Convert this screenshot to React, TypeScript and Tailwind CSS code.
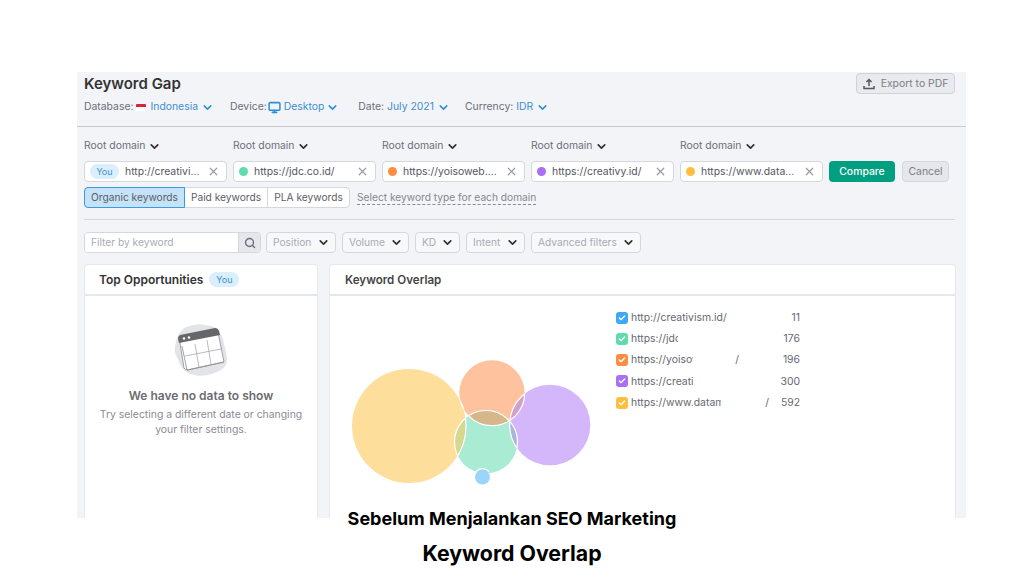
import { ChevronDown, Monitor, Search, X, Check } from "lucide-react";

const Chev = ({ cls = "text-[#333]" }: { cls?: string }) => (
  <ChevronDown size={13} strokeWidth={3.2} className={cls} />
);

const BlueChev = () => <ChevronDown size={13} strokeWidth={2.8} className="text-[#2b8fd6]" />;

const domains = [
  { label: "http://creativi...", color: "", you: true },
  { label: "https://jdc.co.id/", color: "bg-[#5fdcae]" },
  { label: "https://yoisoweb....", color: "bg-[#ff8c43]" },
  { label: "https://creativy.id/", color: "bg-[#a96ff5]" },
  { label: "https://www.data...", color: "bg-[#ffbe3d]" },
];

const filters = [
  { label: "Position", w: "w-[70px]" },
  { label: "Volume", w: "w-[67px]" },
  { label: "KD", w: "w-[45px]" },
  { label: "Intent", w: "w-[59px]" },
  { label: "Advanced filters", w: "w-[110px]" },
];

const legend = [
  { color: "bg-[#3ba9f8]", text: "http://creativism.id/", clip: "w-[96px]", tail: "", tailW: "w-[0px]", n: "11" },
  { color: "bg-[#5fdcae]", text: "https://jdc.co.id/", clip: "w-[47px]", tail: "", tailW: "w-[0px]", n: "176" },
  { color: "bg-[#ff8c43]", text: "https://yoisoweb.com", clip: "w-[62px]", tail: "/", tailW: "w-[46px]", n: "196" },
  { color: "bg-[#a96ff5]", text: "https://creativy.id/", clip: "w-[62px]", tail: "", tailW: "w-[0px]", n: "300" },
  { color: "bg-[#ffbe3d]", text: "https://www.datamedia.id", clip: "w-[90px]", tail: "/", tailW: "w-[48px]", n: "592" },
];

const C = {
  y: { cx: 79, cy: 132, r: 57 },
  o: { cx: 162, cy: 99, r: 32.7 },
  p: { cx: 220, cy: 131, r: 40.3 },
  g: { cx: 156, cy: 148, r: 31.5 },
  b: { cx: 152.5, cy: 183, r: 7.5 },
};

function Venn() {
  return (
    <svg width="270" height="215" viewBox="0 2 270 215" className="shrink-0">
      <defs>
        <clipPath id="cy"><circle {...C.y} /></clipPath>
        <clipPath id="co"><circle {...C.o} /></clipPath>
        <clipPath id="cp"><circle {...C.p} /></clipPath>
        <clipPath id="cg"><circle {...C.g} /></clipPath>
      </defs>
      <circle {...C.y} fill="#fddf9b" />
      <circle {...C.o} fill="#fec39e" />
      <circle {...C.p} fill="#d4b6fb" />
      <circle {...C.g} fill="#a9ecd3" />
      <circle {...C.b} fill="#9dd4fb" />
      <circle {...C.o} fill="#d6b78b" clipPath="url(#cg)" />
      <circle {...C.y} fill="#d6d88e" clipPath="url(#cg)" />
      <circle {...C.y} fill="#fcd09a" clipPath="url(#co)" />
      <circle {...C.o} fill="#d2a1cb" clipPath="url(#cp)" />
      <circle {...C.g} fill="#a9b5da" clipPath="url(#cp)" />
      <g fill="none" stroke="#ffffff" strokeWidth="1.2">
        <circle {...C.y} clipPath="url(#cg)" />
        <circle {...C.y} clipPath="url(#co)" />
        <circle {...C.o} clipPath="url(#cy)" />
        <circle {...C.o} clipPath="url(#cg)" />
        <circle {...C.o} clipPath="url(#cp)" />
        <circle {...C.g} clipPath="url(#cy)" />
        <circle {...C.g} clipPath="url(#co)" />
        <circle {...C.g} clipPath="url(#cp)" />
        <circle {...C.p} clipPath="url(#co)" />
        <circle {...C.p} clipPath="url(#cg)" />
        <path d="M146 178 A8 8 0 0 1 159 178" />
      </g>
    </svg>
  );
}

function Illustration() {
  return (
    <svg width="54" height="54" viewBox="0 0 54 54">
      <path d="M20 1 C26 -1 31 2 37 2 C42 3 47 8 49 15 C50 22 53 28 53 36 C53 42 48 47 40 49 C33 52 24 53 17 50 C11 48 7 44 5 38 C3 32 0 30 1 24 C2 16 4 9 9 5 C13 2 16 2 20 1 Z" fill="#e3e4e8" />
      <path d="M5 13 L41 6 Q43 6 44 8 L50 38 L14 46 Q11 46 10 44 Z" fill="#ffffff" stroke="#8a8a90" strokeWidth="0.8" />
      <path d="M4 15 Q4 12 6 11 L41 4 Q44 4 45 7 L46 11 L5 19 Z" fill="#66666b" />
      <circle cx="10" cy="14.5" r="1.2" fill="#fff" />
      <circle cx="15" cy="13.5" r="1.2" fill="#fff" />
      <path d="M11 32 L47 25 M21 20 L25 43 M33 16 L37 40" stroke="#a9a9ae" strokeWidth="0.8" fill="none" />
      <path d="M8 22 L13 46 L50 38" fill="none" stroke="#8a8a90" strokeWidth="0.8" />
    </svg>
  );
}

export default function App() {
  return (
    <div className="w-[1024px] h-[576px] bg-white pt-[72px] overflow-hidden flex flex-col" style={{ fontFamily: "Inter, sans-serif" }}>
      <div className="ml-[77px] w-[889px] h-[446px] shrink-0 bg-[#f3f4f8] overflow-hidden text-[10.4px] text-[#6c6e79]">
        {/* Header */}
        <div className="h-[55px] border-b border-[#c8cad0] pl-[7px] pr-[11px] flex justify-between items-start pt-px">
          <div>
            <div className="text-[15px] leading-[20px] font-semibold text-[#333] mt-px">Keyword Gap</div>
            <div className="flex items-center mt-[6px] leading-[14px]">
              <span>Database:</span>
              <span className="w-[10px] h-[7px] ml-[3px] mr-[4px] flex flex-col rounded-[1px] overflow-hidden">
                <span className="h-1/2 bg-[#d8233a]" />
                <span className="h-1/2 bg-white" />
              </span>
              <span className="text-[#3f8ed0]">Indonesia</span>
              <span className="ml-[3px]"><BlueChev /></span>
              <span className="ml-[16px]">Device:</span>
              <Monitor size={13} strokeWidth={2.8} className="text-[#2b8fd6] ml-px mr-[3px]" />
              <span className="text-[#3f8ed0]">Desktop</span>
              <span className="ml-[2px]"><BlueChev /></span>
              <span className="ml-[19px]">Date:</span>
              <span className="text-[#3f8ed0] ml-[3px]">July 2021</span>
              <span className="ml-[3px]"><BlueChev /></span>
              <span className="ml-[15px]">Currency:</span>
              <span className="text-[#3f8ed0] ml-[3px]">IDR</span>
              <span className="ml-[3px]"><BlueChev /></span>
            </div>
          </div>
          <div className="w-[99px] h-[21px] rounded-[4px] border border-[#d0d2d8] bg-[#e9eaee] flex items-center justify-center gap-[6px] text-[#7b7d87]">
            <svg width="12" height="12" viewBox="0 0 12 12" fill="none" stroke="#55565c" strokeWidth="1.5">
              <path d="M6 8 V1.5 M3.4 4 L6 1.5 L8.6 4" />
              <path d="M1 8 V10.5 H11 V8" />
            </svg>
            <span>Export to PDF</span>
          </div>
        </div>

        {/* Root domains */}
        <div className="pl-[7px] pt-[12px] flex gap-[6px] items-end">
          {domains.map((d, i) => (
            <div key={i} className="w-[143px]">
              <div className="flex items-center gap-[2px] leading-[14px] mb-[8px]">
                <span>Root domain</span>
                <Chev />
              </div>
              <div className="h-[21px] bg-white rounded-[4px] border border-[#d5d7dc] flex items-center pl-[5px] pr-[6px]">
                {d.you ? (
                  <span className="w-[29px] h-[15px] rounded-full bg-[#dbeefc] text-[#3f8ed0] text-[9px] flex items-center justify-center mr-[6px]">You</span>
                ) : (
                  <span className={`w-[9px] h-[9px] rounded-full ${d.color} mr-[6px]`} />
                )}
                <span className="flex-1 text-[#55565f] whitespace-nowrap overflow-hidden">{d.label}</span>
                <X size={13} strokeWidth={2.2} className="text-[#9a9ba3]" />
              </div>
            </div>
          ))}
          <div className="w-[66px] h-[21px] rounded-[4px] bg-[#009f81] text-white font-medium flex items-center justify-center">Compare</div>
          <div className="w-[47px] h-[21px] ml-px rounded-[4px] bg-[#e6e7ec] border border-[#d5d7dc] text-[#7b7d87] flex items-center justify-center">Cancel</div>
        </div>

        {/* Keyword type */}
        <div className="pl-[7px] mt-[5px] flex items-center text-[10.2px]">
          <div className="flex h-[21px] w-[266px] rounded-[4px] border border-[#d5d7dc] bg-white text-[#5b5d67]">
            <div className="w-[101px] -m-px h-[21px] rounded-l-[4px] border border-[#3b9be0] bg-[#c4e2f8] flex items-center justify-center">Organic keywords</div>
            <div className="w-[83px] ml-px flex items-center justify-center border-r border-[#d5d7dc]">Paid keywords</div>
            <div className="flex-1 flex items-center justify-center">PLA keywords</div>
          </div>
          <span className="ml-[7px] border-b border-dashed border-[#8a8c96] leading-[13px] text-[#84868f]">Select keyword type for each domain</span>
        </div>

        {/* Divider */}
        <div className="ml-[7px] mr-[11px] mt-[11px] border-t border-[#d5d7dc]" />

        {/* Filters */}
        <div className="pl-[7px] mt-[12px] flex gap-[6px] text-[#a9abb3] text-[10.2px]">
          <div className="flex h-[21px] w-[177px] rounded-[4px] border border-[#d5d7dc] overflow-hidden mr-[-1px]">
            <div className="flex-1 bg-white flex items-center pl-[6px]">Filter by keyword</div>
            <div className="w-[22px] bg-[#e6e7ec] border-l border-[#d5d7dc] flex items-center justify-center">
              <Search size={12} strokeWidth={2.8} className="text-[#6c6e79]" />
            </div>
          </div>
          {filters.map((f) => (
            <div key={f.label} className={`${f.w} h-[21px] rounded-[4px] border border-[#d5d7dc] bg-[#f7f8fa] flex items-center justify-between pl-[6px] pr-[5px] whitespace-nowrap`}>
              <span>{f.label}</span>
              <Chev />
            </div>
          ))}
        </div>

        {/* Cards */}
        <div className="pl-[7px] mt-[11px] flex gap-[11px] items-start">
          <div className="w-[234px] h-[300px] bg-white rounded-t-[4px] border border-[#e8e9ed]">
            <div className="h-[31px] border-b-2 border-[#e6e7ec] flex items-center pl-[14px]">
              <span className="text-[12px] font-semibold text-[#333]">Top Opportunities</span>
              <span className="ml-[6px] w-[30px] h-[15px] rounded-full bg-[#dbeefc] text-[#3f8ed0] text-[9px] flex items-center justify-center">You</span>
            </div>
            <div className="flex flex-col items-center pt-[28px]">
              <Illustration />
              <div className="mt-[11px] text-[12px] leading-[14px] font-semibold text-[#6c6c72]">We have no data to show</div>
              <div className="mt-[4px] text-center leading-[15px] text-[#8a8c96]">
                Try selecting a different date or changing
                <br />
                your filter settings.
              </div>
            </div>
          </div>

          <div className="w-[627px] h-[300px] bg-white rounded-t-[4px] border border-[#e8e9ed]">
            <div className="h-[31px] border-b-2 border-[#e6e7ec] flex items-center pl-[15px] pt-[2px]">
              <span className="text-[11.6px] font-semibold text-[#444]">Keyword Overlap</span>
            </div>
            <div className="flex items-start">
              <Venn />
              <div className="ml-[16px] pt-[15px] w-[184px] flex flex-col gap-[8.3px]">
                {legend.map((l) => (
                  <div key={l.n} className="flex items-center h-[13px] text-[#666870]">
                    <span className={`w-[12px] h-[12px] rounded-[3px] ${l.color} flex items-center justify-center mr-[3px] shrink-0`}>
                      <Check size={8} strokeWidth={4} className="text-white" />
                    </span>
                    <span className={`${l.clip} overflow-hidden whitespace-nowrap`}>{l.text}</span>
                    {l.tail && <span className={`${l.tailW} text-right`}>{l.tail}</span>}
                    <span className="ml-auto">{l.n}</span>
                  </div>
                ))}
              </div>
            </div>
          </div>
        </div>
      </div>

      {/* Caption */}
      <div className="relative flex flex-col items-center text-black font-bold -mt-[11px]">
        <div className="text-[18px] leading-[24px]">Sebelum Menjalankan SEO Marketing</div>
        <div className="text-[21.3px] leading-[28px] mt-[8px]">Keyword Overlap</div>
      </div>
    </div>
  );
}
